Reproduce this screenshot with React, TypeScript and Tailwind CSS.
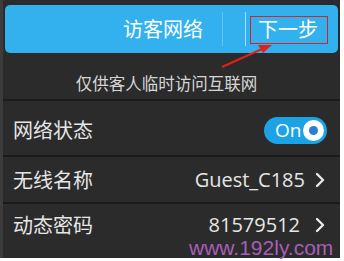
import React from 'react';

const cjk = { fontFamily: '"Noto Sans CJK SC", "Noto Sans", sans-serif' };
const latin = { fontFamily: '"Open Sans", sans-serif' };

function Chevron() {
  return (
    <svg width="10" height="16" viewBox="0 0 10 16" className="ml-[10px]">
      <path d="M2 2 L8 8 L2 14" fill="none" stroke="#e8e8e8" strokeWidth="2.4" strokeLinecap="round" strokeLinejoin="round" />
    </svg>
  );
}

function Toggle() {
  return (
    <div className="flex h-[27px] w-[63px] items-center justify-between rounded-full bg-[#1ba3e6] pl-[11px] pr-[3px]">
      <span className="text-[19px] leading-none text-white" style={latin}>
        On
      </span>
      <div className="flex h-[21px] w-[21px] items-center justify-center rounded-full bg-white">
        <div className="h-[9px] w-[9px] rounded-full bg-[#2a7fd4]" />
      </div>
    </div>
  );
}

export default function App() {
  return (
    <div className="relative h-[261px] w-[344px] overflow-hidden bg-white" style={cjk}>
      <div className="flex h-[258px] w-[340px] flex-col border-l-[3px] border-[#3c3c3c] bg-[#2b2b2b] pt-[5px]">
        {/* Header */}
        <div className="mx-[2px] flex h-[48px] items-center rounded-[5px] bg-[#33b1ee]">
          <div className="flex flex-1 justify-end pr-[19px] text-[20px] text-white">访客网络</div>
          <div className="h-[34px] w-px bg-[#62c5f3]" />
          <div className="ml-[22px] h-[34px] w-px bg-[#a9def8]" />
          <div className="w-[92px] pl-[12px] text-[20px] text-white">下一步</div>
        </div>

        {/* Subtitle */}
        <div className="flex h-[46px] items-end justify-center pb-[3px] pr-[10px] text-[16.5px] text-[#d6d6d6]">
          仅供客人临时访问互联网
        </div>
        <div className="h-[2px] bg-[#1c1c1c]" />

        {/* Rows */}
        <div className="flex h-[54px] items-center justify-between pl-[10px] pr-[13px] pt-[4px]">
          <span className="text-[20px] text-[#e6e6e6]">网络状态</span>
          <Toggle />
        </div>
        <div className="h-[2px] bg-[#1a1a1a]" />
        <div className="flex h-[45px] items-center justify-between pl-[10px] pr-[15px]">
          <span className="text-[20px] text-[#e6e6e6]">无线名称</span>
          <div className="flex items-center">
            <span className="text-[20px] leading-none text-[#e6e6e6]" style={latin}>
              Guest_C185
            </span>
            <Chevron />
          </div>
        </div>
        <div className="h-[2px] bg-[#1a1a1a]" />
        <div className="flex h-[42px] items-center justify-between pl-[10px] pr-[15px]">
          <span className="text-[20px] leading-none text-[#e6e6e6]">动态密码</span>
          <div className="flex items-center">
            <span className="pr-[5px] text-[20px] leading-none text-[#e6e6e6]" style={latin}>
              81579512
            </span>
            <Chevron />
          </div>
        </div>
      </div>

      {/* Annotation box */}
      <div className="absolute left-[250px] top-[16px] h-[28px] w-[78px] border border-[#d0262a]" />
      {/* Annotation arrow */}
      <svg className="absolute left-0 top-0" width="344" height="261">
        <line x1="222" y1="67" x2="262" y2="49" stroke="#e0201a" strokeWidth="2" />
        <polygon points="272,45 258,45 263,53" fill="#e0201a" />
      </svg>
      {/* Watermark */}
      <div
        className="absolute left-[189px] top-[237px] text-[21px] leading-none text-[#a85fb8]"
        style={{ fontFamily: '"Liberation Sans", Arial, sans-serif' }}
      >
        www.192ly.com
      </div>
    </div>
  );
}
